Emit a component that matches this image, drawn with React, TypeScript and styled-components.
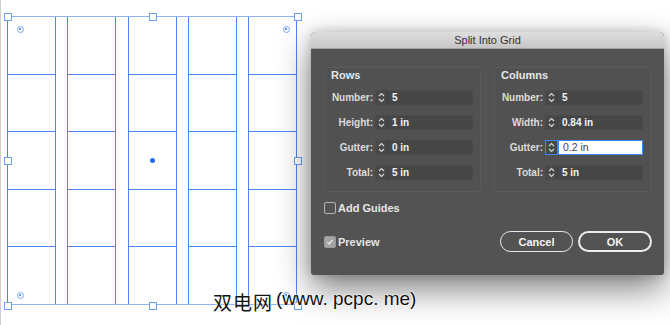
import React from 'react'
import styled, { createGlobalStyle } from 'styled-components'

const GlobalStyle = createGlobalStyle`
    html, body {
        margin: 0;
        padding: 0;
        background: #ffffff;
    }
`

const Screen = styled.div`
    position: relative;
    width: 670px;
    height: 325px;
    overflow: hidden;
    background: #fff;
    border-left: 1px solid #cfcfcf;
    box-sizing: border-box;
    padding: 16px 0 0 6px;
    font-family: 'Liberation Sans', Arial, sans-serif;
`

const Artboard = styled.div`
    position: relative;
    width: 290px;
    height: 289px;
    box-sizing: border-box;
    border-top: 1px solid #8fb3f5;
    border-bottom: 1px solid #8fb3f5;
    display: flex;
    justify-content: space-between;
`

const GridColumn = styled.div`
    width: 49px;
    box-sizing: border-box;
    border: 1px solid #4b86f2;
    border-top: none;
    border-bottom: none;
    display: flex;
    flex-direction: column;
`

const GridCell = styled.div`
    flex: 1;
    border-bottom: 1px solid #4b86f2;
    &:last-child {
        border-bottom: none;
    }
`

const Handle = styled.div<{ $x: number; $y: number }>`
    position: absolute;
    left: ${({ $x }) => $x - 4}px;
    top: ${({ $y }) => $y - 4}px;
    width: 6px;
    height: 6px;
    background: #fff;
    border: 1px solid #6d9ff5;
`

const Anchor = styled.div<{ $x: number; $y: number }>`
    position: absolute;
    left: ${({ $x }) => $x - 3.5}px;
    top: ${({ $y }) => $y - 3.5}px;
    width: 5px;
    height: 5px;
    border-radius: 50%;
    border: 1px solid #7ea8f3;
    display: flex;
    align-items: center;
    justify-content: center;
    &::after {
        content: '';
        width: 2px;
        height: 2px;
        border-radius: 50%;
        background: #3d78e8;
    }
`

const CenterDot = styled.div`
    position: absolute;
    left: 143px;
    top: 141px;
    width: 5px;
    height: 5px;
    border-radius: 50%;
    background: #1f6ff0;
`

const Dialog = styled.div`
    position: absolute;
    left: 310px;
    top: 32px;
    width: 353px;
    border-radius: 5px 5px 3px 3px;
    overflow: hidden;
    background: #535353;
    box-shadow: 0 14px 34px rgba(0, 0, 0, 0.5), 0 0 12px rgba(0, 0, 0, 0.18);
`

const TitleBar = styled.div`
    height: 17px;
    background: linear-gradient(#dedede, #c6c6c6);
    border-bottom: 1px solid #a0a0a0;
    box-sizing: border-box;
    display: flex;
    align-items: center;
    justify-content: center;
    font-size: 11px;
    color: #333;
`

const DialogBody = styled.div`
    padding: 18px 13px 23px 13px;
    display: flex;
    flex-direction: column;
`

const GroupRow = styled.div`
    display: flex;
    gap: 13px;
`

const GroupBox = styled.div`
    width: 157px;
    height: 125px;
    box-sizing: border-box;
    border: 1px solid #5b5b5b;
    border-radius: 3px;
    background: #515151;
    padding: 1px 0 0 0;
`

const GroupTitle = styled.div`
    font-size: 11px;
    font-weight: 700;
    color: #e6e6e6;
    line-height: 13px;
    padding-left: 6px;
    margin-bottom: 8px;
`

const FieldList = styled.div`
    display: flex;
    flex-direction: column;
    gap: 10px;
`

const Field = styled.div`
    display: flex;
    align-items: center;
    height: 15px;
`

const FieldLabel = styled.div`
    width: 48px;
    margin-right: 2px;
    text-align: right;
    font-size: 10px;
    font-weight: 700;
    color: #dcdcdc;
`

const Stepper = styled.div<{ $focus?: boolean }>`
    width: 13px;
    height: 15px;
    box-sizing: border-box;
    background: #484848;
    border: 1px solid ${({ $focus }) => ($focus ? '#3f86f0' : '#4a4a4a')};
    border-right: ${({ $focus }) => ($focus ? '1px solid #3f86f0' : '1px solid #3d3d3d')};
    display: flex;
    align-items: center;
    justify-content: center;
`

const Input = styled.div<{ $focus?: boolean }>`
    width: 85px;
    height: 15px;
    box-sizing: border-box;
    background: ${({ $focus }) => ($focus ? '#ffffff' : '#464646')};
    border: 1px solid ${({ $focus }) => ($focus ? '#3f86f0' : '#4a4a4a')};
    font-size: ${({ $focus }) => ($focus ? '10.5px' : '10px')};
    font-weight: ${({ $focus }) => ($focus ? 400 : 700)};
    color: ${({ $focus }) => ($focus ? '#444' : '#f2f2f2')};
    padding-left: ${({ $focus }) => ($focus ? 4 : 3)}px;
    line-height: 13px;
`

const CheckRow = styled.label`
    display: flex;
    align-items: center;
    gap: 2px;
    font-size: 11px;
    font-weight: 700;
    color: #e6e6e6;
`

const Box = styled.span<{ $checked?: boolean }>`
    width: 12px;
    height: 12px;
    box-sizing: border-box;
    border-radius: 2px;
    border: 1px solid ${({ $checked }) => ($checked ? '#9a9a9a' : '#b5b5b5')};
    background: ${({ $checked }) => ($checked ? '#a4a4a4' : '#555')};
    display: flex;
    align-items: center;
    justify-content: center;
`

const GuidesRow = styled.div`
    margin-top: 9px;
    height: 13px;
    display: flex;
    align-items: center;
`

const Footer = styled.div`
    margin-top: 17px;
    height: 21px;
    display: flex;
    align-items: center;
`

const Buttons = styled.div`
    margin-left: auto;
    margin-right: -1px;
    display: flex;
    gap: 5px;
`

const Button = styled.div<{ $primary?: boolean }>`
    width: ${({ $primary }) => ($primary ? 74 : 73)}px;
    height: 21px;
    box-sizing: border-box;
    border-radius: 11px;
    border: ${({ $primary }) => ($primary ? '2px' : '1.5px')} solid #ececec;
    display: flex;
    align-items: center;
    justify-content: center;
    font-size: 11px;
    font-weight: 700;
    color: #f4f4f4;
`

const Watermark = styled.div`
    position: absolute;
    left: 212px;
    top: 288px;
    font-size: 19px;
    color: #111;
    font-family: 'Liberation Sans', 'Noto Sans CJK SC', sans-serif;
    text-shadow: 0 0 2px #fff, 0 0 2px #fff;
    white-space: nowrap;
    display: flex;
`

const WatermarkCjk = styled.span`
    letter-spacing: 1px;
    margin-right: 3px;
`

function Chevrons() {
    return (
        <svg width="7" height="11" viewBox="0 0 7 11">
            <path d="M1 4 L3.5 1.5 L6 4" fill="none" stroke="#d8d8d8" strokeWidth="1.1" />
            <path d="M1 7 L3.5 9.5 L6 7" fill="none" stroke="#d8d8d8" strokeWidth="1.1" />
        </svg>
    )
}

function Tick() {
    return (
        <svg width="8" height="8" viewBox="0 0 8 8">
            <path d="M1.5 4.2 L3.2 6 L6.5 1.8" fill="none" stroke="#e8e8e8" strokeWidth="1.3" />
        </svg>
    )
}

type FieldSpec = { label: string; value: string; focus?: boolean }

function Group({ title, fields }: { title: string; fields: FieldSpec[] }) {
    return (
        <GroupBox>
            <GroupTitle>{title}</GroupTitle>
            <FieldList>
                {fields.map((f) => (
                    <Field key={f.label}>
                        <FieldLabel>{f.label}</FieldLabel>
                        <Stepper $focus={f.focus}>
                            <Chevrons />
                        </Stepper>
                        <Input $focus={f.focus}>{f.value}</Input>
                    </Field>
                ))}
            </FieldList>
        </GroupBox>
    )
}

const rows: FieldSpec[] = [
    { label: 'Number:', value: '5' },
    { label: 'Height:', value: '1 in' },
    { label: 'Gutter:', value: '0 in' },
    { label: 'Total:', value: '5 in' },
]

const columns: FieldSpec[] = [
    { label: 'Number:', value: '5' },
    { label: 'Width:', value: '0.84 in' },
    { label: 'Gutter:', value: '0.2 in', focus: true },
    { label: 'Total:', value: '5 in' },
]

export default function App() {
    const handles = [
        [1, 0], [146, 0], [291, 0],
        [1, 144], [291, 144],
        [1, 289], [146, 289], [291, 289],
    ]
    const anchors = [
        [13, 12], [279, 12], [13, 278], [279, 278],
    ]
    return (
        <>
            <GlobalStyle />
            <Screen>
                <Artboard>
                    {[0, 1, 2, 3, 4].map((c) => (
                        <GridColumn key={c}>
                            {[0, 1, 2, 3, 4].map((r) => (
                                <GridCell key={r} />
                            ))}
                        </GridColumn>
                    ))}
                    {handles.map(([x, y], i) => (
                        <Handle key={i} $x={x} $y={y} />
                    ))}
                    {anchors.map(([x, y], i) => (
                        <Anchor key={i} $x={x} $y={y} />
                    ))}
                    <CenterDot />
                </Artboard>

                <Dialog>
                    <TitleBar>Split Into Grid</TitleBar>
                    <DialogBody>
                        <GroupRow>
                            <Group title="Rows" fields={rows} />
                            <Group title="Columns" fields={columns} />
                        </GroupRow>
                        <GuidesRow>
                            <CheckRow>
                                <Box />
                                Add Guides
                            </CheckRow>
                        </GuidesRow>
                        <Footer>
                            <CheckRow>
                                <Box $checked>
                                    <Tick />
                                </Box>
                                Preview
                            </CheckRow>
                            <Buttons>
                                <Button>Cancel</Button>
                                <Button $primary>OK</Button>
                            </Buttons>
                        </Footer>
                    </DialogBody>
                </Dialog>

                <Watermark>
                    <WatermarkCjk>双电网</WatermarkCjk>(www. pcpc. me)
                </Watermark>
            </Screen>
        </>
    )
}
